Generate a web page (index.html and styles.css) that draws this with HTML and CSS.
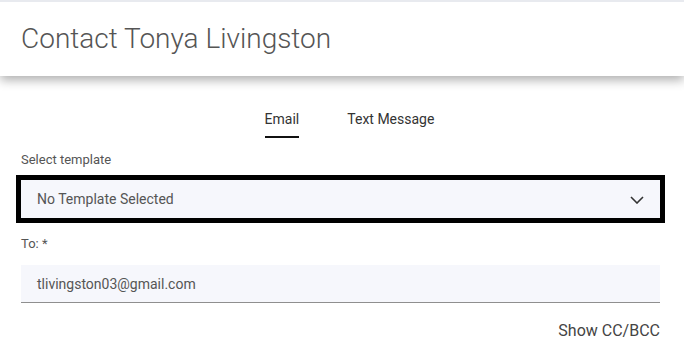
FILE: index.html
```html
<!DOCTYPE html>
<html lang="en">
<head>
  <meta charset="UTF-8">
  <title>Contact Tonya Livingston</title>
  <link rel="stylesheet" href="styles.css">
</head>
<body>
  <div class="dialog-header">
    <h1>Contact Tonya Livingston</h1>
  </div>
  <div class="dialog-body">
    <div class="tabs">
      <span class="tab active">Email</span>
      <span class="tab">Text Message</span>
    </div>

    <label class="field-label">Select template</label>
    <div class="select-box">
      <span>No Template Selected</span>
      <svg class="chevron" width="14" height="8" viewBox="0 0 14 8">
        <path d="M1 1 L7 7 L13 1" fill="none" stroke="#333" stroke-width="1.6"/>
      </svg>
    </div>

    <label class="field-label to-label">To: *</label>
    <div class="text-field">tlivingston03@gmail.com</div>

    <div class="cc-row">
      <span class="cc-link">Show CC/BCC</span>
    </div>
  </div>
</body>
</html>
```

FILE: styles.css
```css
body {
  margin: 0;
  font-family: Roboto, "Liberation Sans", sans-serif;
  background-color: #fff;
  border-top: 2px solid #e8eaef;
}
.dialog-header {
  height: 74px;
  background-color: #fff;
  box-shadow: 0 4px 10px rgba(0,0,0,0.32);
  display: flex;
  align-items: center;
  padding-left: 21px;
  position: relative;
}
.dialog-header h1 {
  margin: 0;
  font-weight: 300;
  font-size: 28px;
  color: #555;
  padding-bottom: 2px;
}
.dialog-body {
  padding: 0 24px 0 21px;
}
.tabs {
  display: flex;
  justify-content: center;
  gap: 48px;
  padding: 35px 0 0 18px;
}
.tab {
  font-size: 14px;
  color: #333;
  padding-bottom: 9px;
  border-bottom: 2px solid transparent;
}
.tab.active {
  border-bottom-color: #111;
}
.field-label {
  display: block;
  font-size: 13px;
  color: #555;
  margin-top: 14px;
  line-height: 16px;
}
.select-box {
  margin-top: 12px;
  height: 38px;
  background-color: #f6f7fc;
  outline: 5px solid #000;
  outline-offset: 0;
  display: flex;
  align-items: center;
  justify-content: space-between;
  padding: 0 16px;
  font-size: 14px;
  color: #555;
}
.chevron {
  margin-top: 1px;
}
.to-label {
  margin-top: 18px;
}
.text-field {
  margin-top: 13px;
  height: 37px;
  background-color: #f6f7fc;
  border-bottom: 1px solid #8f8f8f;
  display: flex;
  align-items: center;
  padding: 0 16px;
  font-size: 14px;
  color: #555;
}
.cc-row {
  display: flex;
  justify-content: flex-end;
  margin-top: 18px;
}
.cc-link {
  font-size: 16px;
  color: #444;
}
```
